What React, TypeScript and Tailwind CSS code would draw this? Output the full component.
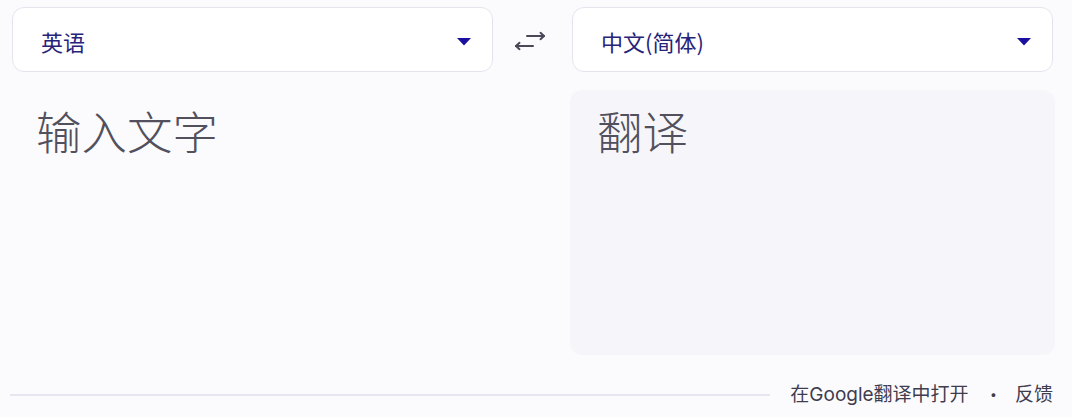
import { useState } from "react";

const FONT = "font-['Inter','Noto_Sans_CJK_SC',sans-serif]";

function Caret() {
  return (
    <svg width="14" height="8" viewBox="0 0 14 8" className="shrink-0">
      <path d="M0 0h14L7 7.5z" fill="#1b0f9e" />
    </svg>
  );
}

function SwapIcon() {
  return (
    <svg width="32" height="22" viewBox="0 0 32 22" fill="none" stroke="#4a4858" strokeWidth="2" strokeLinecap="round" strokeLinejoin="round">
      {/* top arrow -> */}
      <path d="M13 6h17" />
      <path d="M26.5 2.8L30 6l-3.5 3.2" />
      {/* bottom arrow <- */}
      <path d="M19 16H2" />
      <path d="M5.5 12.8L2 16l3.5 3.2" />
    </svg>
  );
}

function LangSelect({ label }: { label: string }) {
  return (
    <button className="flex h-[65px] w-full items-center justify-between rounded-[12px] border border-[#e4e4ee] bg-white pl-[28px] pr-[21px] pt-[4px] text-left">
      <span className="font-['Noto_Sans_CJK_SC',sans-serif] text-[22px] text-[#27237a]">{label}</span>
      <Caret />
    </button>
  );
}

export default function App() {
  const [text, setText] = useState("");

  return (
    <div className={`${FONT} h-[417px] w-full overflow-hidden bg-[#fbfbfe] pl-3 pr-[19px] pt-[7px]`}>
      {/* language bar */}
      <div className="grid grid-cols-[1fr_79px_1fr] items-center">
        <LangSelect label="英语" />
        <div className="flex justify-center pr-[5px] pt-[2px]">
          <SwapIcon />
        </div>
        <LangSelect label="中文(简体)" />
      </div>

      {/* text areas */}
      <div className="mt-[18px] grid h-[265px] grid-cols-[1fr_79px_1fr]">
        <textarea
          value={text}
          onChange={(e) => setText(e.target.value)}
          placeholder="输入文字"
          className="resize-none bg-transparent pl-[24px] pt-[15px] text-[45.5px] font-light leading-[58px] text-[#4f4d58] outline-none placeholder:text-[#52505c]"
        />
        <div />
        <div className="-mx-[2px] rounded-[12px] bg-[#f6f6fa] pl-[27px] pt-[15px] text-[45.5px] font-light leading-[58px] text-[#52505c]">
          翻译
        </div>
      </div>

      {/* footer */}
      <div className="mt-[26px] flex items-center">
        <div className="-ml-[2px] h-[2px] w-[760px] bg-[#e6e6ee]" />
        <div className="ml-auto flex items-center text-[19px] text-[#3f3d4e]">
          <span>在Google翻译中打开</span>
          <span className="ml-[21px] mr-[18px] text-[22px] font-bold leading-none">·</span>
          <span>反馈</span>
        </div>
      </div>
    </div>
  );
}
